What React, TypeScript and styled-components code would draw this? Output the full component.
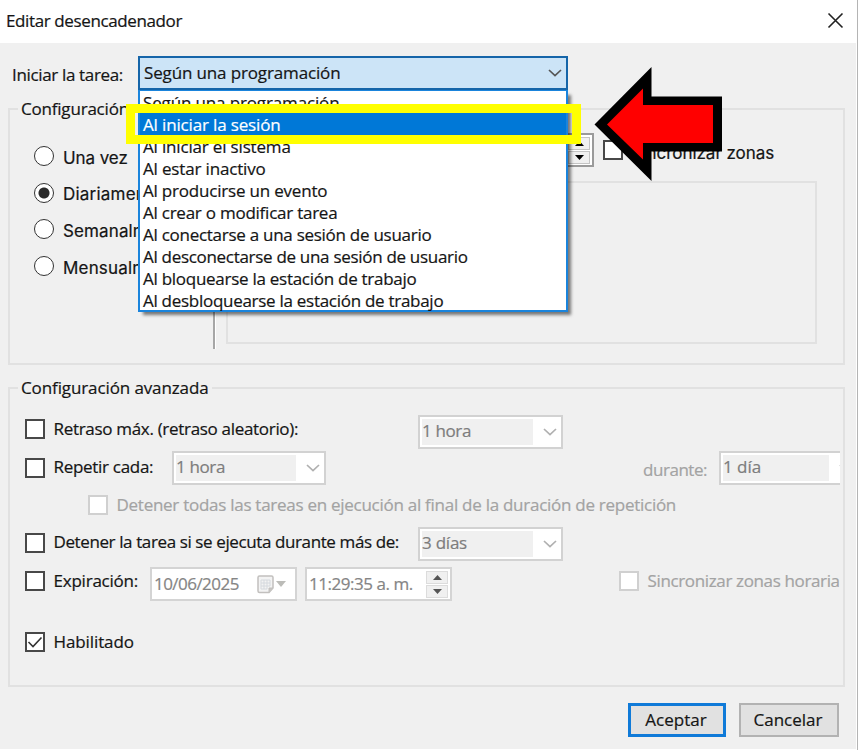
import React from "react";
import styled, { createGlobalStyle, css } from "styled-components";

const GlobalStyle = createGlobalStyle`
  *, *::before, *::after { box-sizing: border-box; }
  body { margin: 0; background: #fff; }
`;

const UI_FONT = `"Open Sans", "Noto Sans", sans-serif`;

const Dialog = styled.div`
  position: relative;
  display: flex;
  flex-direction: column;
  width: 858px;
  height: 750px;
  overflow: hidden;
  background: #fff;
  border-right: 1px solid #b4b4b4;
  font: 17px/22px ${UI_FONT};
  -webkit-text-stroke: 0.2px;
  color: #151515;
`;

const TitleBar = styled.header`
  display: flex;
  justify-content: space-between;
  align-items: center;
  height: 43px;
  padding: 0 13px 3px 6px;
  flex: none;
`;

const Body = styled.main`
  display: flex;
  flex-direction: column;
  height: 706px;
  margin-right: 1px;
  background: #f0f0f0;
`;

const Text = styled.span<{ $ls?: number; $w?: number; $top?: number; $muted?: boolean }>`
  display: block;
  flex: none;
  white-space: nowrap;
  letter-spacing: ${(p) => p.$ls ?? -0.3}px;
  margin-top: ${(p) => p.$top ?? 0}px;
  ${(p) => p.$w && css`width: ${p.$w}px;`}
  ${(p) => p.$muted && css`color: #a3a3a3;`}
`;

const GridText = styled(Text)`
  font-family: Inter, "Liberation Sans", sans-serif;
`;

const RadioText = styled(GridText)`
  width: 75px;
  overflow: hidden;
`;

const TriggerRow = styled.div`
  display: flex;
  align-items: flex-start;
  height: 55px;
  padding: 13px 0 0 12px;
  flex: none;
`;

const TriggerSelect = styled.div`
  position: relative;
  display: flex;
  align-items: center;
  justify-content: space-between;
  width: 430px;
  height: 34px;
  padding: 0 4px 0 4px;
  border: 2px solid #1565a9;
  background: #cce4f7;
`;

const Menu = styled.ul`
  position: absolute;
  z-index: 2;
  top: 32px;
  left: -2px;
  width: 430px;
  height: 222px;
  margin: 0;
  padding: 0;
  list-style: none;
  background: #fff;
  border: 2px solid #1a84dc;
  border-top-width: 1px;
  box-shadow: 4px 4px 3px -1px rgba(0, 0, 0, 0.5);
`;

const MenuItem = styled.li<{ $ls: number; $selected?: boolean }>`
  height: 22px;
  padding-left: 3px;
  line-height: 23px;
  white-space: nowrap;
  letter-spacing: ${(p) => p.$ls}px;
  ${(p) => p.$selected && css`
    background: #0078d7;
    color: #fff;
  `}
`;

const Group = styled.fieldset<{ $h: number; $gap?: number }>`
  flex: none;
  min-width: 0;
  width: 837px;
  height: ${(p) => p.$h}px;
  margin: ${(p) => p.$gap ?? 0}px 0 0 8px;
  padding: 0;
  border: 2px solid #e1e1e1;
`;

const Legend = styled.legend<{ $ls: number }>`
  height: 22px;
  line-height: 21px;
  margin-left: 8px;
  padding: 0 3px;
  letter-spacing: ${(p) => p.$ls}px;
`;

const Columns = styled.div`
  display: flex;
  align-items: flex-start;
`;

const RadioList = styled.div`
  display: flex;
  flex-direction: column;
  width: 203px;
  padding: 18px 0 0 24px;
`;

const RadioRow = styled.label`
  display: flex;
  align-items: center;
  gap: 9px;
  height: 36.6px;
`;

const RadioDot = styled.i<{ $on?: boolean }>`
  display: block;
  flex: none;
  width: 20px;
  height: 20px;
  border: 1.5px solid #333;
  border-radius: 50%;
  background: ${(p) => (p.$on ? "radial-gradient(circle, #2b2b2b 5px, #fff 6px)" : "#fff")};
`;

const Divider = styled.div`
  width: 3px;
  height: 204px;
  margin-top: 25px;
  background: #a6a6a6;
  border-right: 1px solid #fff;
`;

const Schedule = styled.div`
  display: flex;
  flex-direction: column;
  padding: 13px 0 0 10px;
`;

const ScheduleStart = styled.div`
  display: flex;
  padding-left: 104px;
  height: 33px;
`;

const SchedulePanel = styled.div`
  width: 591px;
  height: 163px;
  margin-top: 15px;
  border: 2px solid #e1e1e1;
`;

const TimeField = styled.div<{ $w: number; $dark?: boolean }>`
  display: flex;
  flex: none;
  justify-content: space-between;
  align-items: center;
  width: ${(p) => p.$w}px;
  height: 34px;
  padding: 0 2px 0 2px;
  background: #fff;
  border: 2px solid ${(p) => (p.$dark ? "#9a9a9a" : "#d4d4d4")};
  color: #858585;
`;

const SpinButtons = styled.div`
  display: flex;
  flex-direction: column;
  gap: 1px;
`;

const SpinButton = styled.div<{ $dark?: boolean }>`
  display: flex;
  align-items: center;
  justify-content: center;
  width: 22px;
  height: 13px;
  background: #f0f0f0;
  border: 1px solid ${(p) => (p.$dark ? "#c4c4c4" : "#dcdcdc")};
  color: ${(p) => (p.$dark ? "#000" : "#555")};
`;

const Row = styled.div<{ $gap: number; $h: number; $indent?: number }>`
  display: flex;
  align-items: flex-start;
  width: 830px;
  height: ${(p) => p.$h}px;
  margin-top: ${(p) => p.$gap}px;
  padding-left: ${(p) => p.$indent ?? 15}px;
`;

const Check = styled.span<{ $top: number; $disabled?: boolean; $left?: number }>`
  display: flex;
  flex: none;
  width: 20px;
  height: 20px;
  margin: ${(p) => p.$top}px 8.5px 0 ${(p) => p.$left ?? 0}px;
  border: 2px solid ${(p) => (p.$disabled ? "#d0d0d0" : "#484848")};
  background: #fff;
`;

const Combo = styled.div<{ $w: number }>`
  display: flex;
  flex: none;
  width: ${(p) => p.$w}px;
  height: 34px;
  padding: 2px;
  background: #fff;
  border: 2px solid #d2d2d2;
  color: #7d7d7d;
`;

const ComboValue = styled.div`
  flex: 1;
  height: 26px;
  line-height: 24px;
  background: #f0f0f0;
`;

const ComboArrow = styled.div`
  display: flex;
  align-items: center;
  justify-content: flex-end;
  width: 26px;
  padding: 0 2px 0 0;
  color: #b0b0b0;
`;

const DateArrow = styled.div`
  display: flex;
  align-items: center;
  gap: 2px;
  margin-right: 7px;
`;

const Spacer = styled.div`
  flex: 1;
`;

const Footer = styled.footer`
  display: flex;
  justify-content: flex-end;
  gap: 13px;
  padding: 16px 17px 0 0;
`;

const Button = styled.button<{ $primary?: boolean }>`
  width: ${(p) => (p.$primary ? 98 : 100)}px;
  height: 34px;
  padding: 0 2px 1px 0;
  font: inherit;
  color: inherit;
  background: #e1e1e1;
  border: ${(p) => (p.$primary ? "3px solid #0f7ad8" : "2px solid #b2b2b2")};
`;

const Highlight = styled.div`
  position: absolute;
  z-index: 3;
  top: 104px;
  left: 126px;
  width: 455px;
  height: 40px;
  border: 9px solid #ff0;
`;

const Pointer = styled.svg`
  position: absolute;
  z-index: 3;
  top: 66px;
  left: 594px;
`;

const ClippedSelect = styled.div`
  flex: none;
  width: 121px;
  overflow: hidden;
`;

const TimeGap = styled.div`
  flex: none;
  margin-left: 8px;
`;

const Chevron = ({ stroke = "currentColor" }: { stroke?: string }) => (
  <svg width="14" height="8" viewBox="0 0 14 8" fill="none" stroke={stroke} strokeWidth="1.7">
    <path d="M1 1l6 5.6L13 1" />
  </svg>
);

const Spin = ({ dark }: { dark?: boolean }) => (
  <SpinButtons>
    <SpinButton $dark={dark}>
      <svg width="9" height="5"><path d="M4.5 0L9 5H0z" fill="currentColor" /></svg>
    </SpinButton>
    <SpinButton $dark={dark}>
      <svg width="9" height="5"><path d="M4.5 5L9 0H0z" fill="currentColor" /></svg>
    </SpinButton>
  </SpinButtons>
);

const Select = ({ w, value, ls }: { w: number; value: string; ls?: number }) => (
  <Combo $w={w}>
    <ComboValue><Text as="div" $ls={ls}>{value}</Text></ComboValue>
    <ComboArrow><Chevron /></ComboArrow>
  </Combo>
);

const options: [string, number][] = [
  ["Según una programación", -0.14],
  ["Al iniciar la sesión", -0.15],
  ["Al iniciar el sistema", -0.17],
  ["Al estar inactivo", -0.16],
  ["Al producirse un evento", -0.2],
  ["Al crear o modificar tarea", -0.24],
  ["Al conectarse a una sesión de usuario", -0.27],
  ["Al desconectarse de una sesión de usuario", -0.3],
  ["Al bloquearse la estación de trabajo", -0.27],
  ["Al desbloquearse la estación de trabajo", -0.28],
];

const frequencies: [string, number][] = [
  ["Una vez", -0.08],
  ["Diariamente", 0.22],
  ["Semanalmente", 0.12],
  ["Mensualmente", 0.18],
];

export default function App() {
  return (
    <Dialog>
      <GlobalStyle />
      <TitleBar>
        <Text $ls={-0.38} $top={1}>Editar desencadenador</Text>
        <svg width="17" height="17" viewBox="0 0 17 17" stroke="#222" strokeWidth="1.6">
          <path d="M1.500 1.500l14 14M15.500 1.500l-14 14" />
        </svg>
      </TitleBar>
      <Body>
        <TriggerRow>
          <Text $ls={-0.34} $w={126} $top={8}>Iniciar la tarea:</Text>
          <TriggerSelect>
            <Text $ls={-0.14}>Según una programación</Text>
            <Chevron stroke="#555" />
            <Menu>
              {options.map(([label, ls], i) => (
                <MenuItem key={label} $ls={ls} $selected={i === 1}>{label}</MenuItem>
              ))}
            </Menu>
          </TriggerSelect>
        </TriggerRow>

        <Group $h={267}>
          <Legend $ls={-0.2}>Configuración</Legend>
          <Columns>
            <RadioList>
              {frequencies.map(([label, ls], i) => (
                <RadioRow key={label}>
                  <RadioDot $on={i === 1} />
                  <RadioText $ls={ls} $top={3}>{label}</RadioText>
                </RadioRow>
              ))}
            </RadioList>
            <Divider />
            <Schedule>
              <ScheduleStart>
                <TimeField $w={264} $dark><Spacer /><Spin dark /></TimeField>
                <Check $top={7} $left={9} />
                <GridText $ls={-0.03} $top={9}>Sincronizar zonas</GridText>
              </ScheduleStart>
              <SchedulePanel />
            </Schedule>
          </Columns>
        </Group>

        <Group $h={310} $gap={12}>
          <Legend $ls={-0.11}>Configuración avanzada</Legend>
          <Row $gap={16} $h={34}>
            <Check $top={4} />
            <Text $ls={-0.31} $w={364.5} $top={3}>Retraso máx. (retraso aleatorio):</Text>
            <Select w={145} value="1 hora" ls={-0.36} />
          </Row>
          <Row $gap={2} $h={34}>
            <Check $top={7} />
            <Text $ls={-0.3} $w={118.5} $top={5}>Repetir cada:</Text>
            <Select w={154} value="1 hora" ls={-0.36} />
            <Spacer />
            <Text $ls={-0.46} $w={76} $top={8} $muted>durante:</Text>
            <ClippedSelect>
              <Select w={140} value="1 día" ls={-0.05} />
            </ClippedSelect>
          </Row>
          <Row $gap={9} $h={22} $indent={78}>
            <Check $top={1} $disabled />
            <Text $ls={-0.27} $muted>Detener todas las tareas en ejecución al final de la duración de repetición</Text>
          </Row>
          <Row $gap={11} $h={34}>
            <Check $top={6} />
            <Text $ls={-0.39} $w={364.5} $top={4}>Detener la tarea si se ejecuta durante más de:</Text>
            <Select w={145} value="3 días" ls={-0.23} />
          </Row>
          <Row $gap={6} $h={34}>
            <Check $top={4} />
            <Text $ls={-0.22} $w={96.5} $top={3}>Expiración:</Text>
            <TimeField $w={147}>
              <Text $ls={-0.54}>10/06/2025</Text>
              <DateArrow>
                <svg width="17" height="19" viewBox="0 0 17 19" fill="none" stroke="#c2c0be">
                  <path d="M2.5 1h12a1.5 1.5 0 011.5 1.500V13l-4 4.500H2.500A1.500 1.500 0 011 16V2.500A1.500 1.500 0 012.500 1z" fill="#f3f3f3" strokeWidth="1.500" />
                  <path d="M12 17.500V13h4" fill="#c8c6c4" />
                  <path d="M4 5h9M4 8h9M4 11h9M4 14h6M4 5v9M7 5v9M10 5v9M13 5v6" stroke="#d5d9de" />
                </svg>
                <svg width="10" height="6"><path d="M0 0h10L5 6z" fill="#bcbcb8" /></svg>
              </DateArrow>
            </TimeField>
            <TimeGap>
              <TimeField $w={147}>
                <Text $ls={-0.46}>11:29:35 a. m.</Text>
                <Spin />
              </TimeField>
            </TimeGap>
            <Spacer />
            <Check $top={4} $disabled />
            <Text $ls={-0.36} $w={192.5} $top={3} $muted>Sincronizar zonas horaria</Text>
          </Row>
          <Row $gap={30} $h={24}>
            <Check $top={1}>
              <svg width="16" height="16" viewBox="0 0 16 16" fill="none" stroke="#333" strokeWidth="1.600">
                <path d="M1.500 8l4.500 4.500L14.500 3.500" />
              </svg>
            </Check>
            <Text $ls={-0.1}>Habilitado</Text>
          </Row>
        </Group>

        <Footer>
          <Button $primary>Aceptar</Button>
          <Button>Cancelar</Button>
        </Footer>
      </Body>
      <Highlight />
      <Pointer width="130" height="117" viewBox="594 66 130 117">
        <path d="M594.500 124.500L651.500 67v29.500H722v55h-70.500V181z" fill="#000" />
        <path d="M607 124.500L643 88.500v16.500h70v38h-70v16.500z" fill="#f00" />
      </Pointer>
    </Dialog>
  );
}
